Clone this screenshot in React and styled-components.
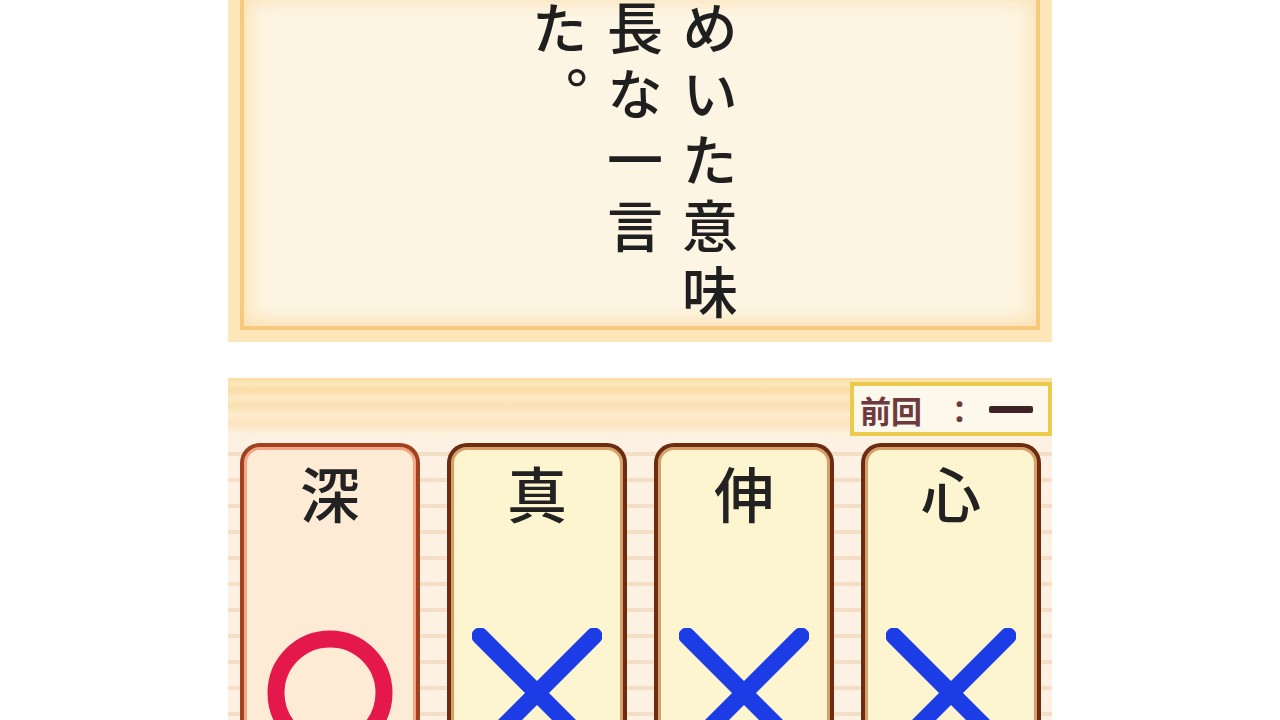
import React from 'react';
import styled, { createGlobalStyle } from 'styled-components';

const GlobalStyle = createGlobalStyle`
  html, body {
    margin: 0;
    padding: 0;
    background: #ffffff;
    overflow: hidden;
  }
`;

const Screen = styled.div`
  width: 1280px;
  height: 720px;
  display: flex;
  flex-direction: column;
  align-items: center;
  overflow: hidden;
  font-family: "Noto Sans CJK JP", "Noto Sans", sans-serif;
`;

const QuestionPanel = styled.div`
  box-sizing: border-box;
  width: 824px;
  height: 342px;
  flex-shrink: 0;
  border: 12px solid #fde6b8;
  border-top: none;
  background: #fde6b8;
  display: flex;
`;

const QuestionInner = styled.div`
  flex: 1;
  border: 4px solid #f7c97d;
  border-top: none;
  background: #fdf5e3;
  box-shadow: inset 0 -6px 18px rgba(249, 214, 150, 0.35),
    inset 8px 0 18px rgba(249, 214, 150, 0.3),
    inset -8px 0 18px rgba(249, 214, 150, 0.3);
  display: flex;
  justify-content: center;
  overflow: hidden;
  padding-right: 10px;
`;

const VerticalText = styled.div`
  writing-mode: vertical-rl;
  white-space: pre;
  font-size: 56px;
  line-height: 75px;
  letter-spacing: 10px;
  font-weight: 500;
  color: #1f1f1f;
`;

const AnswerPanel = styled.div`
  box-sizing: border-box;
  width: 824px;
  margin-top: 36px;
  height: 342px;
  flex-shrink: 0;
  overflow: hidden;
  background:
    repeating-linear-gradient(
      to bottom,
      #fdf1e3 0px,
      #fdf1e3 22px,
      #f4dec6 22px,
      #f4dec6 26px
    );
  display: flex;
  flex-direction: column;
`;

const HeaderStrip = styled.div`
  height: 65px;
  flex-shrink: 0;
  display: flex;
  justify-content: flex-end;
  align-items: flex-start;
  padding-top: 4px;
  box-sizing: border-box;
  background: linear-gradient(
    to bottom,
    #fcdc9f 0px,
    #fde7bd 6px,
    #fbdba6 12px,
    #fde9c4 20px,
    #fbe0b2 28px,
    #fdecce 36px,
    #fce4c0 46px,
    #fdf2e0 56px,
    #fdf1e3 65px
  );
`;

const PrevBox = styled.div`
  box-sizing: border-box;
  width: 202px;
  height: 54px;
  border: 4px solid #ebca4c;
  background: #fdf8ec;
  display: flex;
  align-items: center;
  padding-left: 6px;
  gap: 22px;
  font-size: 31px;
  font-weight: 700;
  color: #6e3a40;
`;

const Dash = styled.span`
  display: inline-block;
  width: 44px;
  height: 7px;
  border-radius: 2px;
  background: #3f2226;
  margin-left: -8px;
`;

const CardRow = styled.div`
  display: flex;
  gap: 27px;
  padding: 0 10px 0 12px;
  flex: 1;
`;

const Card = styled.div`
  box-sizing: border-box;
  width: 180px;
  height: 320px;
  border: 4px solid ${p => (p.$chosen ? '#a3401f' : '#6b2c10')};
  border-bottom: none;
  border-radius: 20px 20px 0 0;
  background: ${p => (p.$chosen ? '#fdebd5' : '#fdf5cf')};
  box-shadow: inset 0 0 0 3px ${p => (p.$chosen ? '#f3a684' : '#d7a06a')};
  display: flex;
  flex-direction: column;
  align-items: center;
`;

const Kanji = styled.div`
  margin-top: 15px;
  font-size: 60px;
  line-height: 60px;
  font-weight: 500;
  color: #222;
`;

const MarkIcon = styled.svg`
  margin-top: 106px;
  width: 130px;
  height: 130px;
  flex-shrink: 0;
`;

const Mark = ({ correct }) =>
  correct ? (
    <MarkIcon viewBox="-65 -65 130 130">
      <circle cx="0" cy="0" r="54" fill="none" stroke="#e5184b" strokeWidth="17" />
    </MarkIcon>
  ) : (
    <MarkIcon viewBox="-65 -65 130 130">
      <g stroke="#1c3de6" strokeWidth="17" strokeLinecap="round">
        <line x1="-57" y1="-57" x2="57" y2="57" />
        <line x1="57" y1="-57" x2="-57" y2="57" />
      </g>
    </MarkIcon>
  );

const choices = [
  { char: '深', correct: true },
  { char: '真', correct: false },
  { char: '伸', correct: false },
  { char: '心', correct: false },
];

export default function App() {
  return (
    <>
      <GlobalStyle />
      <Screen>
        <QuestionPanel>
          <QuestionInner>
            <VerticalText>{'めいた意味\n長な一言\nた。'}</VerticalText>
          </QuestionInner>
        </QuestionPanel>
        <AnswerPanel>
          <HeaderStrip>
            <PrevBox>
              <span>前回</span>
              <span>：</span>
              <Dash />
            </PrevBox>
          </HeaderStrip>
          <CardRow>
            {choices.map(c => (
              <Card key={c.char} $chosen={c.correct}>
                <Kanji>{c.char}</Kanji>
                <Mark correct={c.correct} />
              </Card>
            ))}
          </CardRow>
        </AnswerPanel>
      </Screen>
    </>
  );
}
